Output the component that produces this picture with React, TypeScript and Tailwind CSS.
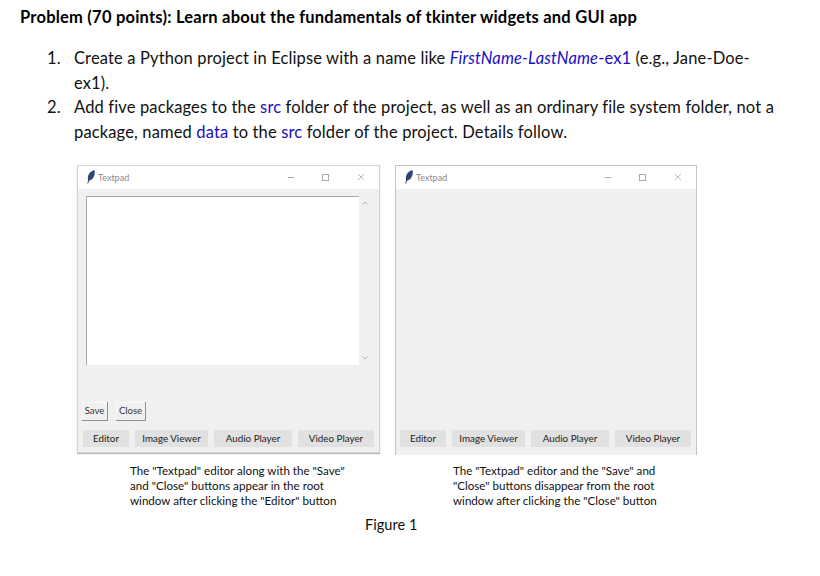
function Feather() {
  return (
    <svg width="8" height="14" viewBox="0 0 8 14" className="shrink-0">
      <path d="M0.8 13.5 L2 9" stroke="#333" strokeWidth="0.9" fill="none" />
      <path d="M1.2 10.8 C-0.2 6 2.4 1 7.6 0.2 C8.4 5 6.4 10 1.2 10.8 Z" fill="#2c4676" />
    </svg>
  );
}

function TitleBar() {
  return (
    <div className="flex h-[23px] shrink-0 items-center bg-white pl-[9px] pr-[15px]">
      <Feather />
      <span className="ml-[3px] text-[9px] text-[#8a8a8a]">Textpad</span>
      <svg width="76" height="10" viewBox="0 0 76 10" className="ml-auto">
        <path d="M0 5.5 H6" stroke="#aaa" strokeWidth="1" />
        <rect x="34.5" y="2.5" width="6" height="6" fill="none" stroke="#aaa" strokeWidth="1" />
        <path d="M70 2 L76 8 M76 2 L70 8" stroke="#aaa" strokeWidth="0.8" />
      </svg>
    </div>
  );
}

function NavButtons({ className }: { className: string }) {
  return (
    <div className={`flex gap-[6px] ${className}`}>
      <div className="flex h-[17px] w-[46px] items-center justify-center bg-[#e1e1e1] text-[9.8px] text-[#222]">Editor</div>
      <div className="flex h-[17px] w-[73px] items-center justify-center bg-[#e1e1e1] text-[9.8px] text-[#222]">Image Viewer</div>
      <div className="flex h-[17px] w-[78px] items-center justify-center bg-[#e1e1e1] text-[9.8px] text-[#222]">Audio Player</div>
      <div className="flex h-[17px] w-[76px] items-center justify-center bg-[#e1e1e1] text-[9.8px] text-[#222]">Video Player</div>
    </div>
  );
}

function SmallButton({ label, width }: { label: string; width: string }) {
  return (
    <div className={`flex h-[19px] items-center justify-center border-r border-b border-[#8f8f8f] bg-[#f0f0f0] text-[9.5px] text-[#333] shadow-[inset_1px_1px_0_#f9f9f9] ${width}`}>
      {label}
    </div>
  );
}

export default function App() {
  return (
    <main className="min-h-screen bg-white pl-[20px] pt-[8px] font-['Lato','Open_Sans',sans-serif] text-black">
      <h1 className="text-[16.5px] font-bold leading-[19px] tracking-[0.22px]">
        Problem (70 points): Learn about the fundamentals of tkinter widgets and GUI app
      </h1>

      <ol className="mt-[19px] text-[16.5px] leading-[24.7px] tracking-[0.14px] text-[#111]">
        <li className="flex">
          <span className="w-[54px] pl-[27px]">1.</span>
          <p className="w-[720px]">
            Create a Python project in Eclipse with a name like{" "}
            <span className="text-[#1a0fc4]"><i>FirstName-LastName</i>-ex1</span> (e.g., Jane-Doe-
            <br />
            ex1).
          </p>
        </li>
        <li className="flex">
          <span className="w-[54px] pl-[27px]">2.</span>
          <p className="w-[740px]">
            Add five packages to the <span className="text-[#1a0fc4]">src</span> folder of the project, as well as an ordinary file system folder, not a
            <br />
            package, named <span className="text-[#1a0fc4]">data</span> to the <span className="text-[#1a0fc4]">src</span> folder of the project. Details follow.
          </p>
        </li>
      </ol>

      <div className="mt-[20px] flex items-start gap-[15px] pl-[57px]">
        <div className="flex h-[288px] w-[303px] flex-col border border-[#d4d4d4] bg-[#f0f0f0] shadow-[0_1px_1px_#bbb]">
          <TitleBar />
          <div className="flex px-[8px] pt-[7px]">
            <div className="h-[169px] w-[273px] border-l border-t border-[#a8a8a8] bg-white" />
            <div className="flex w-[12px] flex-col items-center justify-between py-[5px] text-[#b5b5b5]">
              <svg width="6" height="4" viewBox="0 0 6 4"><path d="M0.5 3.5 L3 1 L5.5 3.5" fill="none" stroke="currentColor" /></svg>
              <svg width="6" height="4" viewBox="0 0 6 4"><path d="M0.5 0.5 L3 3 L5.5 0.5" fill="none" stroke="currentColor" /></svg>
            </div>
          </div>
          <div className="mt-[37px] flex gap-[8px] pl-[4px]">
            <SmallButton label="Save" width="w-[26px]" />
            <SmallButton label="Close" width="w-[30px]" />
          </div>
          <div className="mt-[9px]">
            <NavButtons className="pl-[5px]" />
          </div>
        </div>

        <div className="flex h-[290px] w-[302px] flex-col border-r border-l border-t border-[#c4c4c4] bg-[#f0f0f0]">
          <TitleBar />
          <div className="flex-1" />
          <div className="mb-[8px]">
            <NavButtons className="pl-[4px]" />
          </div>
        </div>
      </div>

      <div className="mt-[8px] flex text-[11.6px] leading-[15px] text-[#111]">
        <p className="ml-[110px] w-[240px]">
          The "Textpad" editor along with the "Save"
          <br />
          and "Close" buttons appear in the root
          <br />
          window after clicking the "Editor" button
        </p>
        <p className="ml-[83px] w-[240px]">
          The "Textpad" editor and the "Save" and
          <br />
          "Close" buttons disappear from the root
          <br />
          window after clicking the "Close" button
        </p>
      </div>

      <p className="ml-[345px] mt-[7px] text-[14.6px] leading-[20px] text-[#111]">Figure 1</p>
    </main>
  );
}
